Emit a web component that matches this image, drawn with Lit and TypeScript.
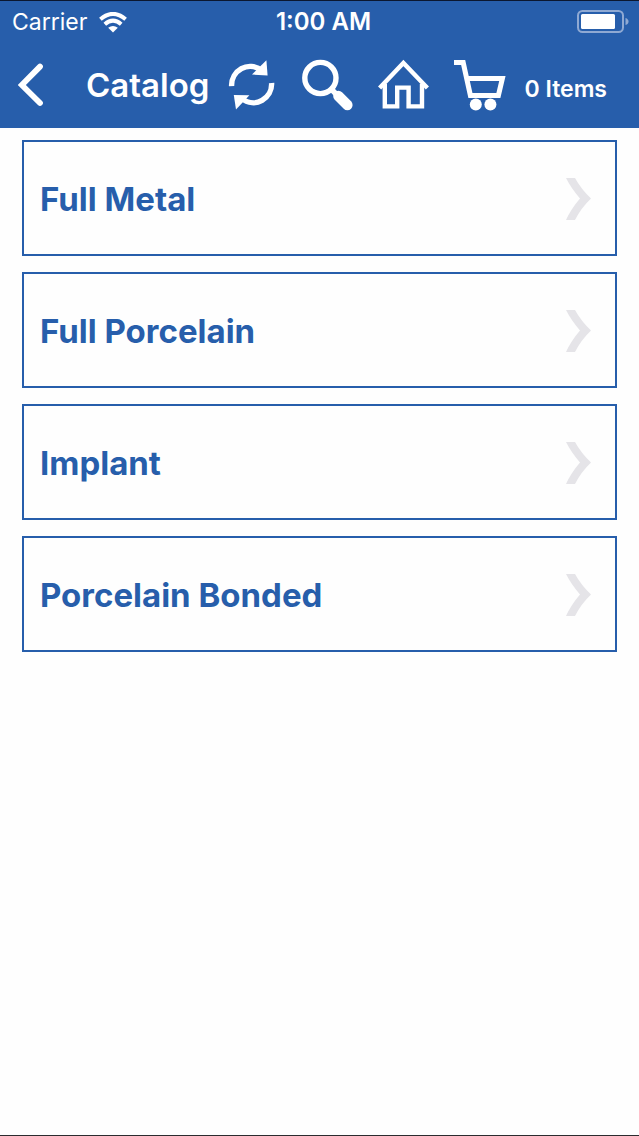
import { LitElement, html, css } from "lit";
import { customElement, property, state } from "lit/decorators.js";

const wifiIcon = html`<svg class="wifi" viewBox="0 0 28 21" aria-hidden="true">
  <g fill="none" stroke="currentColor" stroke-width="4">
    <path d="M1.4 7.2Q14-3.4 26.6 7.2" />
    <path d="M5.8 12.2Q14 5 22.2 12.2" />
  </g>
  <path d="M14 20.5l-4.8-4.7q4.8-3.8 9.6 0z" fill="currentColor" />
</svg>`;

const batteryIcon = html`<svg class="battery" viewBox="0 0 52 24" role="img" aria-label="Battery">
  <rect x="1" y="1" width="45" height="21" rx="4.5" fill="none" stroke="#8fa9d3" stroke-width="2" />
  <rect x="4" y="4" width="34" height="15" rx="1.5" fill="currentColor" />
  <path d="M48.5 8q3 1 3 3.5t-3 3.5z" fill="#8fa9d3" />
</svg>`;

const backIcon = html`<svg class="back-icon" viewBox="0 0 26 44" aria-hidden="true">
  <path d="M22 3.6L3.8 22L22 40" fill="none" stroke="currentColor" stroke-width="5.8" stroke-linecap="round" stroke-linejoin="miter" />
</svg>`;

const refreshIcon = html`<svg viewBox="0 0 52 52" aria-hidden="true">
  <g fill="none" stroke="currentColor" stroke-width="5.4">
    <path d="M5.6 27.2C5 12 22 .6 36.5 12" />
    <path d="M45.6 24C46.4 39 29.6 50.6 15 39" />
  </g>
  <path d="M40.4 1.2L41.6 16.4L26 15.6z" fill="currentColor" />
  <path d="M7.8 36L23.4 36.2L10 50.6z" fill="currentColor" />
</svg>`;

const searchIcon = html`<svg viewBox="0 0 52 52" aria-hidden="true">
  <circle cx="18.4" cy="19" r="15.6" fill="none" stroke="currentColor" stroke-width="5.4" />
  <path d="M28.6 29.4L35 36" stroke="currentColor" stroke-width="5.4" />
  <path d="M36.4 37L45.4 46" stroke="currentColor" stroke-width="10.4" stroke-linecap="round" />
</svg>`;

const homeIcon = html`<svg viewBox="0 0 52 52" aria-hidden="true">
  <g fill="none" stroke="currentColor" stroke-width="4.4">
    <path d="M1.6 29L25.4 4L49.4 29" />
    <path d="M6.8 25V47.4H19.2V28.6H30.6V47.4H44V25" />
  </g>
</svg>`;

const cartIcon = html`<svg viewBox="0 0 52 52" aria-hidden="true">
  <path d="M0 3.6H9.2L16.4 36.4H44.4L48.4 19.4H13" fill="none" stroke="currentColor" stroke-width="5" />
  <circle cx="21.8" cy="45.6" r="6" fill="currentColor" />
  <circle cx="36.4" cy="45.6" r="6" fill="currentColor" />
</svg>`;

@customElement("status-bar")
export class StatusBar extends LitElement {
  static styles = css`
    :host {
      display: grid;
      grid-template-columns: 1fr auto 1fr;
      align-items: center;
      height: 42px;
      padding: 0 10px 0 12px;
      font-size: 23px;
      line-height: 28px;
    }
    .carrier {
      display: flex;
      align-items: center;
      gap: 12px;
    }
    .time {
      padding-left: 6px;
      font-size: 24px;
      font-weight: 600;
    }
    .wifi {
      width: 28px;
      height: 21px;
    }
    .battery {
      width: 52px;
      height: 24px;
      justify-self: end;
    }
  `;

  render() {
    return html`
      <span class="carrier">Carrier ${wifiIcon}</span>
      <time class="time" datetime="01:00">1:00 AM</time>
      ${batteryIcon}
    `;
  }
}

@customElement("nav-header")
export class NavHeader extends LitElement {
  @property({ type: Number }) items = 0;

  static styles = css`
    :host {
      display: flex;
      align-items: center;
      height: 84px;
      padding: 0 32px 0 18px;
    }
    button {
      display: block;
      padding: 0;
      border: 0;
      background: none;
      color: inherit;
      font: inherit;
      cursor: pointer;
    }
    svg {
      display: block;
      width: 52px;
      height: 52px;
    }
    .back-icon {
      width: 26px;
      height: 44px;
    }
    .title {
      flex: 1;
      margin: 0 0 0 42px;
      font-size: 33px;
      font-weight: 600;
      line-height: 40px;
      white-space: nowrap;
    }
    .actions {
      display: flex;
      align-items: center;
      gap: 24px;
    }
    .cart {
      display: flex;
      align-items: center;
      gap: 18px;
    }
    .count {
      padding-top: 8px;
      font-size: 23px;
      font-weight: 600;
      line-height: 28px;
      white-space: nowrap;
    }
  `;

  render() {
    return html`
      <button type="button" aria-label="Back">${backIcon}</button>
      <h1 class="title">Catalog</h1>
      <div class="actions">
        <button type="button" aria-label="Refresh">${refreshIcon}</button>
        <button type="button" aria-label="Search">${searchIcon}</button>
        <button type="button" aria-label="Home">${homeIcon}</button>
        <button type="button" class="cart">
          ${cartIcon}<span class="count">${this.items} Items</span>
        </button>
      </div>
    `;
  }
}

@customElement("app-root")
export class AppRoot extends LitElement {
  @state() private categories = ["Full Metal", "Full Porcelain", "Implant", "Porcelain Bonded"];

  static styles = css`
    :host {
      display: flex;
      flex-direction: column;
      box-sizing: border-box;
      min-height: 100vh;
      border-top: 1px solid #0b1730;
      border-bottom: 1px solid #2b2b2e;
      background: #fefefe;
      font-family: Inter, "Liberation Sans", sans-serif;
    }
    .top {
      padding-bottom: 1px;
      background: #275eab;
      color: #fff;
    }
    .list {
      display: grid;
      gap: 16px;
      margin: 0;
      padding: 12px 22px;
      list-style: none;
    }
    .category {
      display: flex;
      align-items: center;
      justify-content: space-between;
      box-sizing: border-box;
      width: 100%;
      height: 116px;
      padding: 2px 24px 0 16px;
      border: 2px solid #275eab;
      background: #fefefe;
      color: #275eab;
      font: inherit;
      font-size: 33px;
      font-weight: 700;
      line-height: 40px;
      text-align: left;
      cursor: pointer;
    }
    .chevron {
      width: 25px;
      height: 42px;
      color: #e5e4e8;
    }
  `;

  render() {
    return html`
      <header class="top">
        <status-bar></status-bar>
        <nav-header .items=${0}></nav-header>
      </header>
      <main>
        <ul class="list">
          ${this.categories.map(
            (name) => html`<li>
              <button type="button" class="category">
                ${name}
                <svg class="chevron" viewBox="0 0 25 42" aria-hidden="true">
                  <path d="M0 0H9Q15 11 25 20.5Q15 30 9 42H0Q5 31 14 20.5Q5 10 0 0z" fill="currentColor" />
                </svg>
              </button>
            </li>`
          )}
        </ul>
      </main>
    `;
  }
}
